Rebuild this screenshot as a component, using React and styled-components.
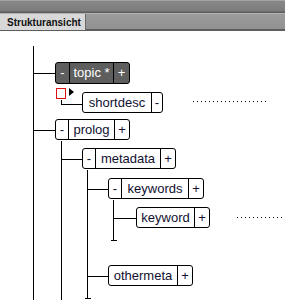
import React from "react";
import styled, { createGlobalStyle } from "styled-components";

const Global = createGlobalStyle`
  html, body { margin: 0; padding: 0; background: #fff; }
  body { font-family: "Liberation Sans", Arial, sans-serif; }
`;

const Page = styled.div`
  width: 285px;
  height: 300px;
  overflow: hidden;
  display: flex;
  flex-direction: column;
  background: #fff;
`;

const TopBar = styled.div`
  height: 13px;
  flex: none;
  background: linear-gradient(#a4a4a4 0, #a4a4a4 1px, #888 1px, #7c7c7c 11px, #5c5c5c 12px, #5c5c5c 13px);
`;

const TabBar = styled.div`
  height: 18px;
  flex: none;
  display: flex;
  align-items: stretch;
  background: linear-gradient(#b4b4b4 0, #b4b4b4 1px, #9c9c9c 1px, #929292 16px, #5e5e5e 16px, #5e5e5e 18px);
`;

const Tab = styled.div`
  width: 86px;
  margin-top: 1px;
  height: 16px;
  background: #d8d8d8;
  border-right: 1px solid #6a6a6a;
  font: bold 10px "Liberation Sans", Arial, sans-serif;
  color: #111;
  line-height: 17px;
  padding-left: 7px;
  box-sizing: border-box;
`;

const Canvas = styled.div`
  position: relative;
  flex: 1;
`;

const Lines = styled.svg`
  position: absolute;
  left: 0;
  top: 0;
  width: 285px;
  height: 269px;
`;

const Node = styled.div`
  position: absolute;
  display: flex;
  height: ${(p) => (p.$dark ? 22 : 21)}px;
  box-sizing: border-box;
  border: 1px solid #000;
  border-radius: 3px;
  background: ${(p) => (p.$dark ? "#5e5e5e" : "#fff")};
  color: ${(p) => (p.$dark ? "#fff" : "#101030")};
  font: 13px "Liberation Sans", Arial, sans-serif;
  line-height: 19px;
  overflow: hidden;
`;

const Cell = styled.div`
  flex: none;
  text-align: center;
  box-sizing: border-box;
  ${(p) => (p.$w ? `width: ${p.$w}px;` : "padding: 0 5px;")}
  & + & {
    border-left: 1px solid ${(p) => (p.$dark ? "#e8e8e8" : "#000")};
  }
`;

const Marker = styled.div`
  position: absolute;
  left: 56px;
  top: 57px;
  width: 10px;
  height: 11px;
  box-sizing: border-box;
  border: 1px solid #e01010;
  background: #fff;
`;

const Arrow = styled.div`
  position: absolute;
  left: 69px;
  top: 57px;
  width: 0;
  height: 0;
  border-top: 4px solid transparent;
  border-bottom: 4px solid transparent;
  border-left: 5px solid #000;
`;

const TreeNode = ({ x, y, minus, label, plus, dark, minusRight, w }) => (
  <Node $dark={dark} style={{ left: x, top: y - 31 }}>
    {minus && !minusRight && (
      <Cell $dark={dark} $w={dark ? 13 : 12}>-</Cell>
    )}
    <Cell $dark={dark} $w={w}>{label}</Cell>
    {minusRight && <Cell $dark={dark} $w={11}>-</Cell>}
    {plus && <Cell $dark={dark} $w={dark ? 16 : 15}>+</Cell>}
  </Node>
);

const L = ({ x1, y1, x2, y2, dash }) => (
  <line
    x1={x1 + 0.5}
    y1={y1 + 0.5}
    x2={x2 + 0.5}
    y2={y2 + 0.5}
    stroke="#000"
    strokeWidth="1"
    strokeDasharray={dash ? "1 3" : undefined}
    shapeRendering="crispEdges"
  />
);

export default function App() {
  return (
    <Page>
      <Global />
      <TopBar />
      <TabBar>
        <Tab>Strukturansicht</Tab>
      </TabBar>
      <Canvas>
        <Lines viewBox="0 31 285 269">
          <L x1={33} y1={45} x2={33} y2={300} />
          <L x1={33} y1={73} x2={55} y2={73} />
          <L x1={33} y1={130} x2={55} y2={130} />
          <L x1={61} y1={99} x2={61} y2={104} />
          <L x1={61} y1={104} x2={82} y2={104} />
          <L x1={61} y1={140} x2={61} y2={300} />
          <L x1={61} y1={159} x2={82} y2={159} />
          <L x1={87} y1={169} x2={87} y2={298} />
          <L x1={84} y1={298} x2={90} y2={298} />
          <L x1={87} y1={189} x2={108} y2={189} />
          <L x1={113} y1={199} x2={113} y2={240} />
          <L x1={110} y1={240} x2={116} y2={240} />
          <L x1={113} y1={218} x2={136} y2={218} />
          <L x1={87} y1={276} x2={108} y2={276} />
          <L x1={192} y1={101} x2={266} y2={101} dash />
          <L x1={236} y1={217} x2={285} y2={217} dash />
        </Lines>
        <TreeNode x={55} y={62} dark minus label="topic *" plus w={44} />
        <Marker />
        <Arrow />
        <TreeNode x={82} y={92} label="shortdesc" minusRight w={68} />
        <TreeNode x={55} y={119} minus label="prolog" plus w={46} />
        <TreeNode x={82} y={148} minus label="metadata" plus w={65} />
        <TreeNode x={108} y={178} minus label="keywords" plus w={67} />
        <TreeNode x={136} y={207} label="keyword" plus w={57} />
        <TreeNode x={108} y={265} label="othermeta" plus w={68} />
      </Canvas>
    </Page>
  );
}
